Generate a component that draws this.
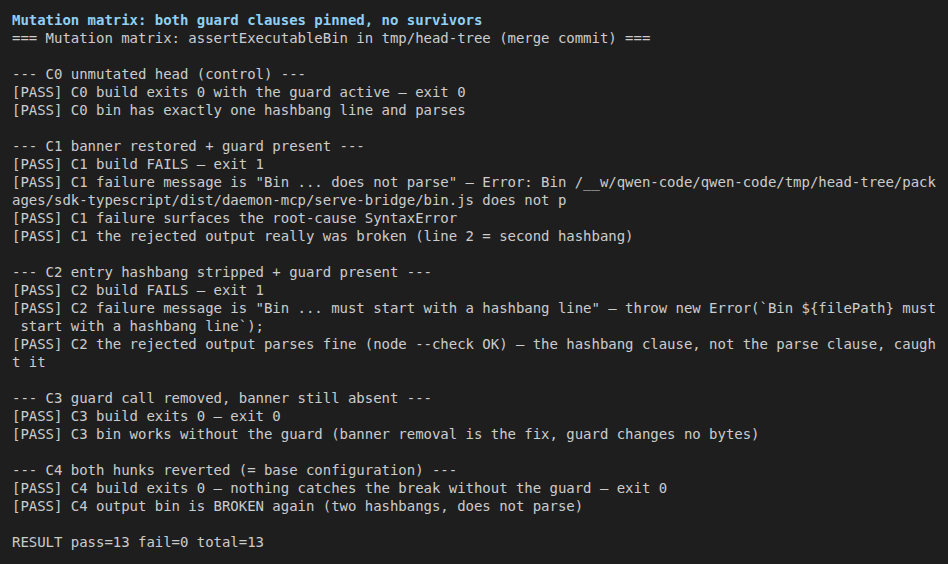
import React from "react";

const lines: string[] = [
  "=== Mutation matrix: assertExecutableBin in tmp/head-tree (merge commit) ===",
  "",
  "--- C0 unmutated head (control) ---",
  "[PASS] C0 build exits 0 with the guard active — exit 0",
  "[PASS] C0 bin has exactly one hashbang line and parses",
  "",
  "--- C1 banner restored + guard present ---",
  "[PASS] C1 build FAILS — exit 1",
  '[PASS] C1 failure message is "Bin ... does not parse" — Error: Bin /__w/qwen-code/qwen-code/tmp/head-tree/pack',
  "ages/sdk-typescript/dist/daemon-mcp/serve-bridge/bin.js does not p",
  "[PASS] C1 failure surfaces the root-cause SyntaxError",
  "[PASS] C1 the rejected output really was broken (line 2 = second hashbang)",
  "",
  "--- C2 entry hashbang stripped + guard present ---",
  "[PASS] C2 build FAILS — exit 1",
  '[PASS] C2 failure message is "Bin ... must start with a hashbang line" — throw new Error(`Bin ${filePath} must',
  " start with a hashbang line`);",
  "[PASS] C2 the rejected output parses fine (node --check OK) — the hashbang clause, not the parse clause, caugh",
  "t it",
  "",
  "--- C3 guard call removed, banner still absent ---",
  "[PASS] C3 build exits 0 — exit 0",
  "[PASS] C3 bin works without the guard (banner removal is the fix, guard changes no bytes)",
  "",
  "--- C4 both hunks reverted (= base configuration) ---",
  "[PASS] C4 build exits 0 — nothing catches the break without the guard — exit 0",
  "[PASS] C4 output bin is BROKEN again (two hashbangs, does not parse)",
  "",
  "RESULT pass=13 fail=0 total=13",
];

export default function App() {
  return (
    <div
      className="w-[948px] h-[564px] overflow-hidden bg-[#1e1e1e] pl-[12px] pt-[11px] text-[14px] leading-[18px] tracking-[-0.03px] text-[#cccccc]"
      style={{ fontFamily: '"DejaVu Sans Mono", "Liberation Mono", monospace' }}
    >
      <div className="font-bold text-[#8fd0f5] whitespace-pre">
        Mutation matrix: both guard clauses pinned, no survivors
      </div>
      {lines.map((l, i) => (
        <div key={i} className="whitespace-pre h-[18px]">
          {l}
        </div>
      ))}
    </div>
  );
}
